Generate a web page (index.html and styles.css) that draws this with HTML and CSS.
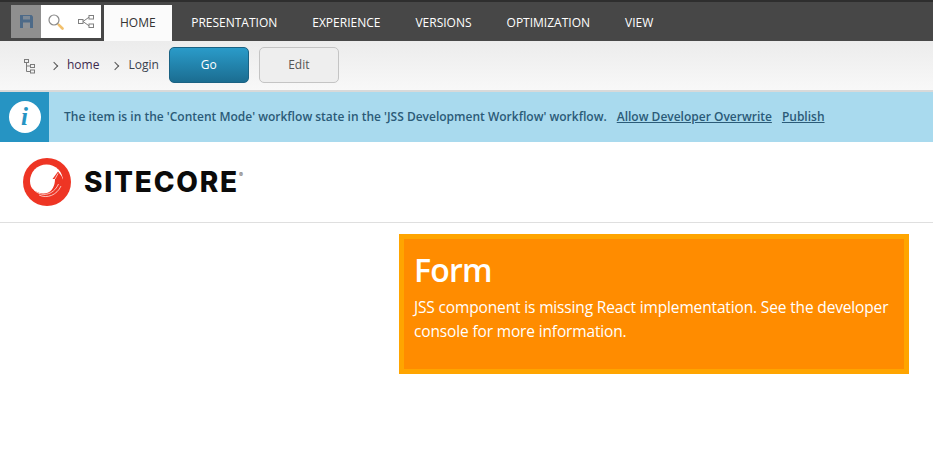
FILE: index.html
```html
<!DOCTYPE html>
<html lang="en">
<head>
    <meta charset="UTF-8">
    <title>Login</title>
    <link rel="stylesheet" href="styles.css">
</head>
<body>
    <div class="ribbon">
        <div class="tools">
            <span class="tool tool-save">
                <svg width="13" height="13" viewBox="0 0 13 13">
                    <path d="M0 0h11.500L13 1.500V13H0z" fill="#4d6a88"/>
                    <rect x="3" y="1" width="7" height="3.500" fill="#7f8a96"/>
                    <rect x="3" y="7.500" width="7" height="5.500" fill="#8f9296"/>
                </svg>
            </span>
            <span class="tool">
                <svg width="16" height="16" viewBox="0 0 16 16" fill="none">
                    <circle cx="6" cy="6" r="5" stroke="#8a8a8a" stroke-width="1.200"/>
                    <path d="M9.500 9.500l1 1" stroke="#8a8a8a" stroke-width="1.300"/>
                    <path d="M10.800 10.800l3.700 3.700" stroke="#f2c06c" stroke-width="2.600" stroke-linecap="round"/>
                </svg>
            </span>
            <span class="tool">
                <svg width="16" height="13" viewBox="0 0 16 13" fill="none" stroke="#808080" stroke-width="1">
                    <rect x="0.500" y="4.500" width="4.500" height="4"/>
                    <rect x="11" y="0.500" width="4.500" height="3.500"/>
                    <rect x="11" y="9" width="4.500" height="3.500"/>
                    <path d="M5 6.500L11 2.200M5 6.500L11 10.800"/>
                </svg>
            </span>
        </div>
        <ul class="tabs">
            <li class="tab active">HOME</li>
            <li class="tab">PRESENTATION</li>
            <li class="tab">EXPERIENCE</li>
            <li class="tab">VERSIONS</li>
            <li class="tab">OPTIMIZATION</li>
            <li class="tab">VIEW</li>
        </ul>
    </div>

    <div class="toolbar">
        <svg class="tree-icon" width="11" height="15" viewBox="0 0 11 15" fill="none" stroke="#7c7c7c" stroke-width="1">
            <rect x="0.500" y="0.500" width="4" height="3"/>
            <rect x="6.500" y="5.500" width="4" height="3"/>
            <rect x="6.500" y="11" width="4" height="3"/>
            <path d="M2.500 3.500v9h4M2.500 7h4"/>
        </svg>
        <span class="crumb crumb-home">home</span>
        <span class="crumb crumb-login">Login</span>
        <button class="btn btn-go">Go</button>
        <button class="btn btn-edit">Edit</button>
    </div>

    <div class="notification">
        <div class="info-box"><span class="info-circle">i</span></div>
        <p class="info-text">The item is in the 'Content Mode' workflow state in the 'JSS Development Workflow' workflow.</p>
        <a class="info-link" href="#">Allow Developer Overwrite</a>
        <a class="info-link" href="#">Publish</a>
    </div>

    <header class="site-header">
        <svg class="logo-mark" width="48" height="48" viewBox="0 0 48 48" fill="none">
            <circle cx="24" cy="24" r="24" fill="#ee3524"/>
            <circle cx="23.500" cy="23" r="16.500" fill="#fff"/>
            <path d="M7.500 28C11 34 18 36.500 24 35C29 33.500 32 28 32 21L29.500 21L35 13.500L38.500 18L41 24A17 17 0 0 1 7.500 28Z" fill="#ee3524"/>
            <path d="M11 32C18 39 30 38 35.500 26M16 37C24 41 34 37 38 28M32 21L35 15.500" stroke="#fff" stroke-width="0.700"/>
        </svg>
        <span class="logo-text">SITECORE<sup>®</sup></span>
    </header>

    <main class="content">
        <section class="missing">
            <h2>Form</h2>
            <p>JSS component is missing React implementation. See the developer console for more information.</p>
        </section>
    </main>
</body>
</html>
```

FILE: styles.css
```css
* {
    margin: 0;
    padding: 0;
    box-sizing: border-box;
}

body {
    background: #fff;
    font-family: 'Open Sans', sans-serif;
}

.ribbon {
    height: 41px;
    background: #474747;
    border-top: 2px solid #2e2e2e;
    padding: 3px 0 0 11px;
    display: flex;
    align-items: flex-start;
}

.tools {
    display: flex;
    height: 33px;
    width: 90px;
    background: #fff;
}

.tool {
    width: 30px;
    height: 33px;
    display: flex;
    align-items: center;
    justify-content: center;
}

.tool-save {
    background: #8f8f8f;
}

.tabs {
    display: flex;
    list-style: none;
    margin-left: 3px;
}

.tab {
    height: 36px;
    padding: 0 17.500px;
    line-height: 36px;
    font-size: 12px;
    color: #fff;
}

.tab.active {
    background: #fbfbfb;
    color: #333;
    padding: 0 16px;
    margin-right: 2px;
}

.toolbar {
    height: 51px;
    background: linear-gradient(#ececec, #f8f8f8);
    border-bottom: 2px solid #d9d9d9;
    display: flex;
    align-items: center;
    padding: 0 0 0 24px;
    font-size: 12px;
    color: #444;
}

.tree-icon {
    margin: 2px 0 0 0;
}

.crumb {
    position: relative;
    margin-top: -2px;
}

.crumb::before {
    content: '';
    position: absolute;
    left: -16px;
    top: 7px;
    width: 5px;
    height: 5px;
    border-top: 1px solid #555;
    border-right: 1px solid #555;
    transform: rotate(45deg);
}

.crumb-home {
    margin-left: 32px;
    color: #3d2a4d;
}

.crumb-login {
    margin-left: 29px;
    color: #39424e;
}

.btn {
    font-family: 'Open Sans', sans-serif;
    font-size: 12px;
    height: 36px;
    width: 80px;
    border-radius: 5px;
    margin-top: -2px;
}

.btn-go {
    margin-left: 10px;
    color: #fff;
    background: linear-gradient(#2a9bc9, #1b6d91);
    border: 1px solid #1a6283;
}

.btn-edit {
    margin-left: 10px;
    color: #555;
    background: #eeeeee;
    border: 1px solid #c4c4c4;
}

.notification {
    height: 50px;
    background: #a9daee;
    display: flex;
    align-items: center;
    font-size: 12px;
    font-weight: 600;
    color: #2b5b78;
}

.info-box {
    width: 49px;
    height: 50px;
    background: #2694c3;
    display: flex;
    align-items: center;
    justify-content: center;
}

.info-circle {
    width: 32px;
    height: 32px;
    border-radius: 50%;
    background: #fff;
    color: #2694c3;
    font-family: 'Liberation Serif', serif;
    font-style: italic;
    font-weight: 700;
    font-size: 25px;
    line-height: 32px;
    text-align: center;
}

.info-text {
    margin: -2px 0 0 15px;
}

.info-link {
    color: #2b5b78;
    margin: -2px 0 0 10px;
}

.site-header {
    height: 81px;
    border-bottom: 1px solid #dfdfdf;
    display: flex;
    align-items: center;
    padding: 0 0 0 23px;
}

.logo-text {
    margin-left: 13px;
    font-family: 'Inter', sans-serif;
    font-weight: 800;
    font-size: 28px;
    letter-spacing: 1.800px;
    color: #0b0b0b;
}

.logo-text sup {
    font-size: 6px;
    font-weight: 400;
    letter-spacing: 0;
    vertical-align: 15px;
    line-height: 0;
    color: #555;
}

.content {
    padding: 11px 24px 0 399px;
}

.missing {
    height: 140px;
    background: #ff8c00;
    border: 5px solid #ffa500;
    padding: 11px 10px 10px;
    color: #fff;
}

.missing h2 {
    font-size: 32px;
    font-weight: 600;
    letter-spacing: -0.800px;
    line-height: 40px;
    margin-bottom: 5px;
}

.missing p {
    font-size: 15.500px;
    letter-spacing: -0.150px;
    line-height: 24px;
}
```
